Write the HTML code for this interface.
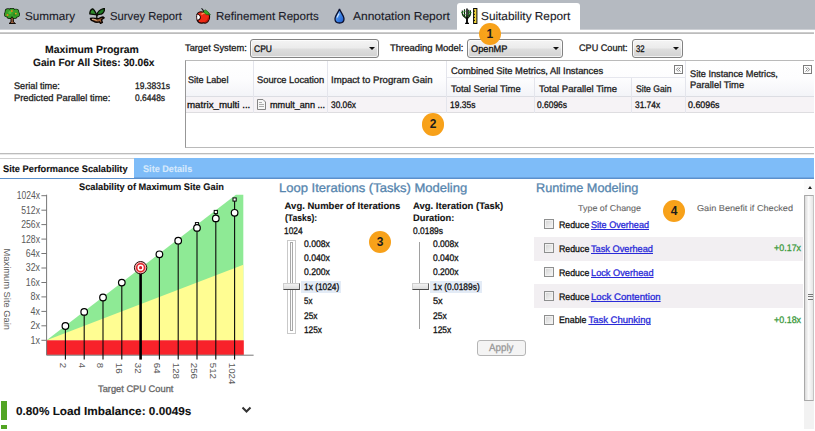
<!DOCTYPE html>
<html lang="en">
<head>
<meta charset="utf-8">
<title>Suitability Report</title>
<style>
html,body{margin:0;padding:0;}
body{width:815px;height:431px;position:relative;overflow:hidden;background:#fff;font-family:"Liberation Sans",Arial,sans-serif;}
.abs{position:absolute;}
.t{position:absolute;white-space:pre;text-rendering:geometricPrecision;transform-origin:0 50%;display:block;-webkit-text-stroke:0.3px;}
section,nav,header,div,span,svg{box-sizing:border-box;}
#tabbar{position:absolute;left:0;top:0;width:815px;height:30px;background:linear-gradient(#b5bac1 0,#b5bac1 29px,#cdd0d5 29px);}
#tabbar .active{position:absolute;left:457px;top:3px;width:123px;height:30px;background:#fff;border-radius:3px 3px 0 0;}
#hline1{position:absolute;left:0;top:32px;width:814px;height:2px;background:linear-gradient(#d4d4d4,#b4b4b4);}
.badge{position:absolute;width:22.400px;height:22.400px;border-radius:50%;background:radial-gradient(circle at 50% 45%,#f9a51c 0,#f7a019 70%,#f9b040 100%);color:#1c1c1c;font-weight:700;font-size:12px;line-height:22.400px;text-align:center;}
.combo{position:absolute;height:19px;top:39px;border:1px solid #828282;border-radius:3px;background:linear-gradient(#f4f4f4 0,#ebebeb 48%,#dedede 52%,#d2d2d2 100%);box-shadow:inset 0 0 0 1px rgba(255,255,255,.7);}
.combo i{position:absolute;right:3.5px;top:7px;width:0;height:0;border-left:3.2px solid transparent;border-right:3.2px solid transparent;border-top:3.5px solid #111;}
#grid{position:absolute;left:185px;top:60px;width:629px;height:88px;border:1px solid #bababa;border-left-color:#979797;border-right:0;background:#fff;}
#grid .hdr{position:absolute;left:0;top:0;width:628px;height:36px;background:linear-gradient(#ffffff 0,#fdfdfe 50%,#f3f4f8 100%);border-bottom:1px solid #dcdde3;}
#grid .row{position:absolute;left:0;top:36px;width:628px;height:16px;background:#f6f3f6;border-bottom:1px solid #dedde0;}
#grid .vs{position:absolute;top:0;width:1px;height:52px;background:#e4e5ec;}
#grid .hs{position:absolute;left:261px;top:16px;width:238px;height:1px;background:#e6e7ee;}
.exp{position:absolute;top:64.600px;width:9px;height:9px;border:1px solid #7c7c7c;background:#fdfdfd;}
#hline2{position:absolute;left:0;top:153px;width:814px;height:2px;background:linear-gradient(#bcbcbc 0,#bcbcbc 1px,#e9e9e9 1px,#e9e9e9 2px);}
#ltabs{position:absolute;left:0;top:158px;width:814px;height:21px;background:linear-gradient(#7ebcf8 0,#7ebcf8 18.5px,#6ea6e2 19.5px,#5d93cf 20px);border-bottom:1px solid #5b90cc;}
#ltabs .active{position:absolute;left:0;top:0;width:134.3px;height:19.6px;background:#fff;border-top:1px solid #d0d0d0;}
.rowbg{position:absolute;left:534px;width:269px;height:23px;background:#f2eff2;}
.cb{position:absolute;left:544px;width:10px;height:10px;border:1px solid #8e8f8f;background:linear-gradient(135deg,#d2d2d2,#f8f8f8);box-shadow:inset 0 0 0 1px #f1f1f1;}
.hl{position:absolute;height:11.5px;background:#e3ebf6;}
.thumb{position:absolute;width:17px;height:7.6px;background:linear-gradient(#f3f3f3,#dcdcdc);border-top:1px solid #cfcfcf;border-left:1px solid #cfcfcf;border-right:1px solid #5e5e5e;border-bottom:1.5px solid #4a4a4a;}
#apply{position:absolute;left:476.5px;top:340px;width:49.5px;height:15.5px;border:1px solid #b5b5b5;border-radius:3px;background:#f4f4f4;}
#vscroll{position:absolute;left:803.700px;top:179.500px;width:10.300px;height:249px;background:#f2f2f2;}
#vscroll .th{position:absolute;left:0;top:15.5px;width:10.300px;height:205.5px;border:1px solid #a9a9a9;border-right-color:#c4c4c4;border-radius:1px;background:linear-gradient(90deg,#dadada 0,#fbfbfb 45%,#e6e6e6 100%);}
#vscroll .up{position:absolute;left:0;top:0;width:11px;height:16px;background:#fbfbfb;}
#vscroll .up i{position:absolute;left:4.2px;top:6.8px;width:0;height:0;border-left:2.6px solid transparent;border-right:2.6px solid transparent;border-bottom:3.3px solid #222;}
#vscroll .grip{position:absolute;left:3.5px;top:98px;width:5px;height:6px;background:repeating-linear-gradient(#777 0,#777 1px,transparent 1px,transparent 2.4px);}
</style>
</head>
<body>

<nav id="tabbar">
  <div class="active"></div>
  <svg class="abs" style="left:4px;top:8px" width="16" height="16" viewBox="0 0 16 16"><path d="M5.800 9.200L7 11.200V14L5 15.500H11.500L9.400 14V11.200L10.600 9.200z" fill="#9a5f3c" stroke="#140a05" stroke-width="1"/><circle cx="4" cy="3.6" r="3.25" fill="#0b1407"/><circle cx="8" cy="2.9" r="3.15" fill="#0b1407"/><circle cx="12" cy="3.8" r="3.15" fill="#0b1407"/><circle cx="2.9" cy="6.4" r="2.95" fill="#0b1407"/><circle cx="13.1" cy="6.4" r="2.95" fill="#0b1407"/><circle cx="5.4" cy="8" r="2.95" fill="#0b1407"/><circle cx="10.6" cy="7.9" r="2.95" fill="#0b1407"/><circle cx="8" cy="5.5" r="3.55" fill="#0b1407"/><circle cx="4" cy="3.6" r="2.60" fill="#3a9f28"/><circle cx="8" cy="2.9" r="2.50" fill="#3a9f28"/><circle cx="12" cy="3.8" r="2.50" fill="#3a9f28"/><circle cx="2.9" cy="6.4" r="2.30" fill="#3a9f28"/><circle cx="13.1" cy="6.4" r="2.30" fill="#3a9f28"/><circle cx="5.4" cy="8" r="2.30" fill="#3a9f28"/><circle cx="10.6" cy="7.9" r="2.30" fill="#3a9f28"/><circle cx="8" cy="5.5" r="2.90" fill="#3a9f28"/><circle cx="6" cy="4.500" r="1.600" fill="#4fc436"/><circle cx="10.500" cy="6.500" r="1.500" fill="#2c8a20"/><circle cx="7.800" cy="3" r="1" fill="#e88a1c"/><circle cx="3.500" cy="7" r="1" fill="#e8821c"/><circle cx="11.800" cy="5.600" r=".9" fill="#e8a01c"/></svg>
<svg class="abs" style="left:89px;top:8px" width="16" height="16" viewBox="0 0 16 16">
<path d="M1.500 10.500c2-.8 4.500 0 6.500.3 2 .2 4-1.800 6-1.800l1 .800-2.500 2 .800 2.700-1.800.900-1-1.500c-2 .600-4.500.300-6-.700-1.500-.500-3-1.200-3-2.700z" fill="#9a5c34" stroke="#0c0603" stroke-width="1.400"/>
<path d="M3 11.300c1.500-.3 3 .2 4.500 1" stroke="#e8c6a0" stroke-width="1" fill="none"/>
<path d="M7.800 10.500V6.500" stroke="#0d1208" stroke-width="1.400"/>
<path d="M7.800 7C6.500 5 5.500 1 3.500.800 1.800 1.500.800 4 .800 5.800c2 .700 5 .500 7 1.200z" fill="#2f8a2a" stroke="#0a0f06" stroke-width="1.300"/>
<path d="M7.800 7c.500-2.500 3-6 7.700-6.500.200 2-1 5-3 5.500-1.500.500-3.200.300-4.700 1z" fill="#1f7a22" stroke="#0a0f06" stroke-width="1.300"/>
</svg>
<svg class="abs" style="left:195.500px;top:7.500px" width="15" height="16" viewBox="0 0 15 16">
<path d="M7 4.200C5 3.200 2 3.800 1 6.400C3 6.600 4.500 8 4.300 9.600C4.100 11.200 2.500 12 1.200 12.200C2 14 4 15.400 6 15.100C7 14.800 8 14.800 9 15.100C11.500 15.400 13.600 12 13.600 9C13.600 6 11.500 3.600 9.500 3.900C8.500 4.100 8 4.500 7 4.200z" fill="#ee2a14" stroke="#1a0505" stroke-width="1.100"/>
<path d="M1 6.600C2.800 6.900 4 8.200 3.800 9.500C3.600 10.800 2.400 11.600 1.100 11.900C.600 10.500.500 8.200 1 6.600z" fill="#fff"/>
<path d="M1 6.400C.400 8 .500 10.500 1.200 12.200" fill="none" stroke="#2a0a0a" stroke-width="1"/>
<path d="M5.500 6.500c1-1.300 2.800-1.800 4.200-1.200" stroke="#ff9a5a" stroke-width="1.300" fill="none"/>
<path d="M9.500 13.800c1.800-.600 3-2.300 3.200-4.300" stroke="#b81408" stroke-width="1.200" fill="none"/>
<path d="M7 3.200L9.400 1.900L11.500 3.400L14.400 6.800L10.500 6.600L8.500 5z" fill="#35a526" stroke="#165c10" stroke-width=".7"/>
<path d="M7.600 3.800C7.300 2.300 6.600 1.200 5.500.400" stroke="#111" stroke-width="1.100" fill="none"/>
</svg>
<svg class="abs" style="left:334.200px;top:7.900px" width="11" height="16" viewBox="0 0 11 16">
<defs><linearGradient id="dg" x1="0" y1="0" x2="1" y2="1"><stop offset="0" stop-color="#9fd0ff"/><stop offset=".5" stop-color="#3f86e8"/><stop offset="1" stop-color="#1d55c4"/></linearGradient></defs>
<path d="M5.500 1C5 3.500 1 7.500 1 11c0 2.500 2 4 4.500 4S10 13.500 10 11c0-3.500-4-7.500-4.500-10z" fill="url(#dg)" stroke="#0a1030" stroke-width="1.300"/>
<path d="M3.300 9.500c.300-1.500 1-2.800 1.800-3.800" stroke="#d8ecff" stroke-width="1.100" fill="none"/>
</svg>
<svg class="abs" style="left:461px;top:8px" width="17" height="16" viewBox="0 0 17 16">
<path d="M1 6L2.500 8.500L5 10L6 10.800L7 10L9 8.500L10.300 6L9 6.500L7.500 8L6 7L4.500 8L2.500 6.500z" fill="#3a8f2e" opacity=".7"/>
<path d="M1.300 2.600V6C1.300 8 3.500 9 5.600 10.500M3.500 1.300V8.300M7.700 1.800V8.300M9.400 2.200V6C9.400 8 8 9 6.400 10.500" stroke="#0e240c" stroke-width="1.150" fill="none"/>
<path d="M.300 4.500h2M2.600 3.300h1.800M6.800 3.800h1.800M8.500 4.600h2M2.500 6.500h2M7 6.500h2" stroke="#1f7a1f" stroke-width="1.200" fill="none"/>
<path d="M6 .400V10" stroke="#000" stroke-width="1.500" fill="none"/><path d="M6 9.500V15.300" stroke="#050505" stroke-width="1.900" fill="none"/>
<path d="M4.100 15.400h3.900" stroke="#050505" stroke-width="1.300" fill="none"/>
<rect x="12.600" y=".500" width="3.300" height="15" fill="#f5d83a" stroke="#0a0a0a" stroke-width="1"/>
<path d="M12.600 3.200h1.400M12.600 6.300h1.400M12.600 9.400h1.400M12.600 12.400h1.400" stroke="#0a0a0a" stroke-width="1"/>
</svg>
  <span class="t" style="left:24.5px;top:10px;font-size:11.5px;line-height:14px;color:#1b1b28;transform:scaleX(1.018);-webkit-text-stroke:0.12px;">Summary</span>
<span class="t" style="left:109.5px;top:10px;font-size:11.5px;line-height:14px;color:#1b1b28;transform:scaleX(0.979);-webkit-text-stroke:0.12px;">Survey Report</span>
<span class="t" style="left:215.6px;top:10px;font-size:11.5px;line-height:14px;color:#1b1b28;transform:scaleX(1.005);-webkit-text-stroke:0.12px;">Refinement Reports</span>
<span class="t" style="left:352.5px;top:10px;font-size:11.5px;line-height:14px;color:#1b1b28;transform:scaleX(1.044);-webkit-text-stroke:0.12px;">Annotation Report</span>
<span class="t" style="left:481.4px;top:10px;font-size:11.5px;line-height:14px;color:#1b1b28;transform:scaleX(1.027);-webkit-text-stroke:0.12px;">Suitability Report</span>
</nav>
<div id="hline1"></div>

<section id="summary">
<span class="t" style="left:44.8px;top:44px;font-size:10.5px;line-height:13px;color:#111;font-weight:700;transform:scaleX(0.993);-webkit-text-stroke:0.1px;">Maximum Program</span>
<span class="t" style="left:33.1px;top:57px;font-size:10.5px;line-height:13px;color:#111;font-weight:700;transform:scaleX(0.967);-webkit-text-stroke:0.1px;">Gain For All Sites: 30.06x</span>
<span class="t" style="left:13.7px;top:81px;font-size:9.5px;line-height:11px;color:#222;transform:scaleX(0.966);">Serial time:</span>
<span class="t" style="left:13.7px;top:93px;font-size:9.5px;line-height:11px;color:#222;transform:scaleX(0.986);">Predicted Parallel time:</span>
<span class="t" style="left:135.2px;top:81px;font-size:9.5px;line-height:11px;color:#222;transform:scaleX(0.893);">19.3831s</span>
<span class="t" style="left:135.2px;top:93px;font-size:9.5px;line-height:11px;color:#222;transform:scaleX(0.890);">0.6448s</span>
</section>

<section id="toolbar">
  <div class="combo" style="left:250px;width:129px;"><i></i></div>
  <div class="combo" style="left:467px;width:96px;"><i></i></div>
  <div class="combo" style="left:632px;width:51px;"><i></i></div>
<span class="t" style="left:185.3px;top:43px;font-size:9.5px;line-height:11px;color:#222;transform:scaleX(0.974);">Target System:</span>
<span class="t" style="left:254.0px;top:44px;font-size:9.5px;line-height:11px;color:#111;transform:scaleX(0.897);">CPU</span>
<span class="t" style="left:389.5px;top:43px;font-size:9.5px;line-height:11px;color:#222;transform:scaleX(0.994);">Threading Model:</span>
<span class="t" style="left:470.6px;top:44px;font-size:9.5px;line-height:11px;color:#111;transform:scaleX(0.971);">OpenMP</span>
<span class="t" style="left:579.0px;top:43px;font-size:9.5px;line-height:11px;color:#222;transform:scaleX(0.959);">CPU Count:</span>
<span class="t" style="left:635.9px;top:44px;font-size:9.5px;line-height:11px;color:#111;transform:scaleX(0.813);">32</span>
</section>

<section id="grid">
  <div class="hdr"></div>
  <div class="row"></div>
  <div class="vs" style="left:67px"></div>
  <div class="vs" style="left:141px"></div>
  <div class="vs" style="left:260px"></div>
  <div class="vs" style="left:348px;top:17px;height:35px"></div>
  <div class="vs" style="left:445px;top:17px;height:35px"></div>
  <div class="vs" style="left:499px"></div>
  <div class="hs"></div>
</section>
<svg class="exp" style="left:674px" viewBox="0 0 9 9"><path d="M4.200 1.800L1.800 4.500L4.200 7.200M7 1.800L4.600 4.500L7 7.200" fill="none" stroke="#666" stroke-width="1"/></svg>
<svg class="exp" style="left:803.300px" viewBox="0 0 9 9"><path d="M2 1.800L4.400 4.500L2 7.200M4.800 1.800L7.200 4.500L4.800 7.200" fill="none" stroke="#666" stroke-width="1"/></svg>
<svg class="abs" style="left:257px;top:99px" width="9" height="11" viewBox="0 0 9 11"><path d="M0.5 0.5h5.5l2.5 2.5v7.5h-8z" fill="#f7f7f7" stroke="#858585"/><path d="M2 3.5h3M2 5.5h5M2 7.5h5" stroke="#9a9a9a" stroke-width="0.8"/></svg>
<section id="gridtext">
<span class="t" style="left:188.2px;top:75px;font-size:9.5px;line-height:11px;color:#222;transform:scaleX(0.956);">Site Label</span>
<span class="t" style="left:257.1px;top:75px;font-size:9.5px;line-height:11px;color:#222;transform:scaleX(0.979);">Source Location</span>
<span class="t" style="left:330.8px;top:75px;font-size:9.5px;line-height:11px;color:#222;transform:scaleX(1.007);">Impact to Program Gain</span>
<span class="t" style="left:451.0px;top:66px;font-size:9.5px;line-height:11px;color:#222;transform:scaleX(0.987);">Combined Site Metrics, All Instances</span>
<span class="t" style="left:451.0px;top:84px;font-size:9.5px;line-height:11px;color:#222;transform:scaleX(0.992);">Total Serial Time</span>
<span class="t" style="left:538.7px;top:84px;font-size:9.5px;line-height:11px;color:#222;transform:scaleX(1.005);">Total Parallel Time</span>
<span class="t" style="left:636.0px;top:84px;font-size:9.5px;line-height:11px;color:#222;transform:scaleX(0.908);">Site Gain</span>
<span class="t" style="left:689.6px;top:69px;font-size:9.5px;line-height:11px;color:#222;transform:scaleX(0.968);">Site Instance Metrics,</span>
<span class="t" style="left:689.6px;top:80px;font-size:9.5px;line-height:11px;color:#222;transform:scaleX(0.985);">Parallel Time</span>
<span class="t" style="left:187.4px;top:100px;font-size:9.5px;line-height:11px;color:#111;transform:scaleX(1.025);">matrix_multi ...</span>
<span class="t" style="left:269.8px;top:100px;font-size:9.5px;line-height:11px;color:#111;transform:scaleX(0.957);">mmult_ann ...</span>
<span class="t" style="left:330.8px;top:100px;font-size:9.5px;line-height:11px;color:#111;transform:scaleX(0.876);">30.06x</span>
<span class="t" style="left:449.6px;top:100px;font-size:9.5px;line-height:11px;color:#111;transform:scaleX(0.890);">19.35s</span>
<span class="t" style="left:537.2px;top:100px;font-size:9.5px;line-height:11px;color:#111;transform:scaleX(0.887);">0.6096s</span>
<span class="t" style="left:635.0px;top:100px;font-size:9.5px;line-height:11px;color:#111;transform:scaleX(0.880);">31.74x</span>
<span class="t" style="left:688.0px;top:100px;font-size:9.5px;line-height:11px;color:#111;transform:scaleX(0.932);">0.6096s</span>
</section>

<div class="badge" style="left:478.600px;top:22.900px;">1</div>
<div class="badge" style="left:421.800px;top:113.400px;">2</div>

<div id="hline2"></div>
<nav id="ltabs"><div class="active"></div></nav>
<section id="ltabstext">
<span class="t" style="left:3.0px;top:164px;font-size:9.5px;line-height:11px;color:#111;font-weight:700;transform:scaleX(0.975);-webkit-text-stroke:0.1px;">Site Performance Scalability</span>
<span class="t" style="left:143.0px;top:164px;font-size:9.5px;line-height:11px;color:#d6e9fc;font-weight:700;transform:scaleX(0.961);-webkit-text-stroke:0.1px;">Site Details</span>
</section>

<section id="chart">
<svg class="abs" style="left:0;top:178px" width="272" height="253" viewBox="0 178 272 253" font-family="'Liberation Sans',Arial,sans-serif">
<polygon points="46.6,340.3 235.9,194.7 243.3,194.7 243.3,340.3" fill="#8eea95"/>
<polygon points="46.6,340.3 243.3,264.7 243.3,340.3" fill="#fffd92"/>
<rect x="46.6" y="340.3" width="197.2" height="14.6" fill="#f8222a"/>
<path d="M46.6 194.7V355.2H253.6" fill="none" stroke="#777" stroke-width="1"/>
<path d="M41.4 340.3H46.6" stroke="#777" stroke-width="1"/>
<text x="40" y="343.7" text-anchor="end" font-size="10" fill="#5a5a5a" textLength="9.5" lengthAdjust="spacingAndGlyphs">1x</text>
<path d="M41.4 325.8H46.6" stroke="#777" stroke-width="1"/>
<text x="40" y="329.2" text-anchor="end" font-size="10" fill="#5a5a5a" textLength="9.5" lengthAdjust="spacingAndGlyphs">2x</text>
<path d="M41.4 311.4H46.6" stroke="#777" stroke-width="1"/>
<text x="40" y="314.8" text-anchor="end" font-size="10" fill="#5a5a5a" textLength="9.5" lengthAdjust="spacingAndGlyphs">4x</text>
<path d="M41.4 296.9H46.6" stroke="#777" stroke-width="1"/>
<text x="40" y="300.3" text-anchor="end" font-size="10" fill="#5a5a5a" textLength="9.5" lengthAdjust="spacingAndGlyphs">8x</text>
<path d="M41.4 282.5H46.6" stroke="#777" stroke-width="1"/>
<text x="40" y="285.9" text-anchor="end" font-size="10" fill="#5a5a5a" textLength="14.2" lengthAdjust="spacingAndGlyphs">16x</text>
<path d="M41.4 268.0H46.6" stroke="#777" stroke-width="1"/>
<text x="40" y="271.4" text-anchor="end" font-size="10" fill="#5a5a5a" textLength="14.2" lengthAdjust="spacingAndGlyphs">32x</text>
<path d="M41.4 253.5H46.6" stroke="#777" stroke-width="1"/>
<text x="40" y="256.9" text-anchor="end" font-size="10" fill="#5a5a5a" textLength="14.2" lengthAdjust="spacingAndGlyphs">64x</text>
<path d="M41.4 239.1H46.6" stroke="#777" stroke-width="1"/>
<text x="40" y="242.5" text-anchor="end" font-size="10" fill="#5a5a5a" textLength="18.8" lengthAdjust="spacingAndGlyphs">128x</text>
<path d="M41.4 224.6H46.6" stroke="#777" stroke-width="1"/>
<text x="40" y="228.0" text-anchor="end" font-size="10" fill="#5a5a5a" textLength="18.8" lengthAdjust="spacingAndGlyphs">256x</text>
<path d="M41.4 210.2H46.6" stroke="#777" stroke-width="1"/>
<text x="40" y="213.6" text-anchor="end" font-size="10" fill="#5a5a5a" textLength="18.8" lengthAdjust="spacingAndGlyphs">512x</text>
<path d="M41.4 195.7H46.6" stroke="#777" stroke-width="1"/>
<text x="40" y="199.1" text-anchor="end" font-size="10" fill="#5a5a5a" textLength="23.3" lengthAdjust="spacingAndGlyphs">1024x</text>
<path d="M65.4 326V359.6" stroke="#0a0a0a" stroke-width="1.1"/>
<circle cx="65.4" cy="326" r="3.3" fill="#fff" stroke="#000" stroke-width="1.2"/>
<text transform="translate(59.8 362.8) rotate(90)" font-size="9.5" fill="#5a5a5a" textLength="5.3" lengthAdjust="spacingAndGlyphs">2</text>
<path d="M84.2 311.9V359.6" stroke="#0a0a0a" stroke-width="1.1"/>
<circle cx="84.2" cy="311.9" r="3.3" fill="#fff" stroke="#000" stroke-width="1.2"/>
<text transform="translate(78.6 362.8) rotate(90)" font-size="9.5" fill="#5a5a5a" textLength="5.3" lengthAdjust="spacingAndGlyphs">4</text>
<path d="M103.0 297.5V359.6" stroke="#0a0a0a" stroke-width="1.1"/>
<circle cx="103.0" cy="297.5" r="3.3" fill="#fff" stroke="#000" stroke-width="1.2"/>
<text transform="translate(97.4 362.8) rotate(90)" font-size="9.5" fill="#5a5a5a" textLength="5.3" lengthAdjust="spacingAndGlyphs">8</text>
<path d="M121.8 282.6V359.6" stroke="#0a0a0a" stroke-width="1.1"/>
<circle cx="121.8" cy="282.6" r="3.3" fill="#fff" stroke="#000" stroke-width="1.2"/>
<text transform="translate(116.2 362.8) rotate(90)" font-size="9.5" fill="#5a5a5a" textLength="10.8" lengthAdjust="spacingAndGlyphs">16</text>
<path d="M140.6 267.7V359.6" stroke="#000" stroke-width="2.6"/>
<circle cx="140.6" cy="267.7" r="6.2" fill="#f3b4b4" stroke="#2a0c0c" stroke-width="1"/>
<circle cx="140.6" cy="267.7" r="4.7" fill="#e1262c"/>
<circle cx="140.6" cy="267.7" r="3.1" fill="#fff"/>
<circle cx="140.6" cy="267.7" r="1.6" fill="#d81f28"/>
<text transform="translate(135.0 362.8) rotate(90)" font-size="9.5" fill="#5a5a5a" textLength="10.8" lengthAdjust="spacingAndGlyphs">32</text>
<path d="M159.4 254.3V359.6" stroke="#0a0a0a" stroke-width="1.1"/>
<circle cx="159.4" cy="254.3" r="3.3" fill="#fff" stroke="#000" stroke-width="1.2"/>
<text transform="translate(153.8 362.8) rotate(90)" font-size="9.5" fill="#5a5a5a" textLength="10.8" lengthAdjust="spacingAndGlyphs">64</text>
<path d="M178.2 240.7V359.6" stroke="#0a0a0a" stroke-width="1.1"/>
<circle cx="178.2" cy="240.7" r="3.3" fill="#fff" stroke="#000" stroke-width="1.2"/>
<text transform="translate(172.6 362.8) rotate(90)" font-size="9.5" fill="#5a5a5a" textLength="16.2" lengthAdjust="spacingAndGlyphs">128</text>
<path d="M197.0 224.2V359.6" stroke="#0a0a0a" stroke-width="1.1"/>
<rect x="195.4" y="222.6" width="3.2" height="3.2" fill="#fff" stroke="#000" stroke-width="1"/>
<circle cx="197.0" cy="227.9" r="3.3" fill="#fff" stroke="#000" stroke-width="1.2"/>
<text transform="translate(191.4 362.8) rotate(90)" font-size="9.5" fill="#5a5a5a" textLength="16.2" lengthAdjust="spacingAndGlyphs">256</text>
<path d="M215.8 212V359.6" stroke="#0a0a0a" stroke-width="1.1"/>
<rect x="214.2" y="210.4" width="3.2" height="3.2" fill="#fff" stroke="#000" stroke-width="1"/>
<circle cx="215.8" cy="218.4" r="3.3" fill="#fff" stroke="#000" stroke-width="1.2"/>
<text transform="translate(210.2 362.8) rotate(90)" font-size="9.5" fill="#5a5a5a" textLength="16.2" lengthAdjust="spacingAndGlyphs">512</text>
<path d="M234.6 199.5V359.6" stroke="#0a0a0a" stroke-width="1.1"/>
<rect x="233.0" y="197.9" width="3.2" height="3.2" fill="#fff" stroke="#000" stroke-width="1"/>
<circle cx="234.6" cy="212.8" r="3.3" fill="#fff" stroke="#000" stroke-width="1.2"/>
<text transform="translate(229.0 362.8) rotate(90)" font-size="9.5" fill="#5a5a5a" textLength="21.5" lengthAdjust="spacingAndGlyphs">1024</text>
<text transform="translate(3.6 248.5) rotate(90)" font-size="9.8" fill="#5a5a5a" textLength="81.5" lengthAdjust="spacingAndGlyphs">Maximum Site Gain</text>
</svg>
<span class="t" style="left:78.6px;top:182px;font-size:9.5px;line-height:11px;color:#111;font-weight:700;transform:scaleX(0.973);-webkit-text-stroke:0.1px;">Scalability of Maximum Site Gain</span>
<span class="t" style="left:97.6px;top:384px;font-size:9.5px;line-height:11px;color:#666;transform:scaleX(0.978);">Target CPU Count</span>
<span class="t" style="left:16.0px;top:405px;font-size:11.5px;line-height:14px;color:#111;font-weight:700;transform:scaleX(1.024);-webkit-text-stroke:0.1px;">0.80% Load Imbalance: 0.0049s</span>
<div class="abs" style="left:1px;top:401.300px;width:6.200px;height:18.700px;background:#52a524"></div>
<div class="abs" style="left:1px;top:424.500px;width:6.200px;height:4.400px;background:#52a524"></div>
<svg class="abs" style="left:240.5px;top:406px" width="11" height="8" viewBox="0 0 11 8"><path d="M1.5 1.5L5.5 5.5L9.5 1.5" fill="none" stroke="#333" stroke-width="2"/></svg>
</section>

<section id="loop">
  <div class="abs" style="left:287.4px;top:239.800px;width:8.600px;height:93.800px;border:1px solid #c9c9c9;"></div>
  <div class="abs" style="left:290.100px;top:242.300px;width:3.200px;height:89.200px;border:1px solid #a9a9a9;background:#fdfdfd"></div>
  <div class="abs" style="left:418.5px;top:242px;width:1px;height:87px;background:#a0a0a0;"></div>
  <div class="hl" style="left:300.5px;top:281px;width:40.5px;"></div>
  <div class="hl" style="left:430px;top:281px;width:52px;"></div>
  <div class="thumb" style="left:282.600px;top:282.700px;"></div>
  <div class="thumb" style="left:411.600px;top:282.700px;"></div>
  <div id="apply"></div>
<span class="t" style="left:278.6px;top:181px;font-size:12.5px;line-height:15px;color:#5685ae;transform:scaleX(1.042);-webkit-text-stroke:0.3px;">Loop Iterations (Tasks) Modeling</span>
<span class="t" style="left:284.6px;top:201px;font-size:9.5px;line-height:11px;color:#111;font-weight:700;-webkit-text-stroke:0.1px;">Avg. Number of Iterations</span>
<span class="t" style="left:284.6px;top:213px;font-size:9.5px;line-height:11px;color:#111;font-weight:700;transform:scaleX(0.901);-webkit-text-stroke:0.1px;">(Tasks):</span>
<span class="t" style="left:284.0px;top:226px;font-size:9.5px;line-height:11px;color:#111;transform:scaleX(0.880);">1024</span>
<span class="t" style="left:304.0px;top:239px;font-size:9.5px;line-height:11px;color:#111;transform:scaleX(0.908);">0.008x</span>
<span class="t" style="left:432.8px;top:239px;font-size:9.5px;line-height:11px;color:#111;transform:scaleX(0.897);">0.008x</span>
<span class="t" style="left:304.0px;top:253px;font-size:9.5px;line-height:11px;color:#111;transform:scaleX(0.908);">0.040x</span>
<span class="t" style="left:432.8px;top:253px;font-size:9.5px;line-height:11px;color:#111;transform:scaleX(0.897);">0.040x</span>
<span class="t" style="left:304.0px;top:267px;font-size:9.5px;line-height:11px;color:#111;transform:scaleX(0.908);">0.200x</span>
<span class="t" style="left:432.8px;top:267px;font-size:9.5px;line-height:11px;color:#111;transform:scaleX(0.897);">0.200x</span>
<span class="t" style="left:304.0px;top:282px;font-size:9.5px;line-height:11px;color:#111;transform:scaleX(0.879);">1x (1024)</span>
<span class="t" style="left:432.8px;top:282px;font-size:9.5px;line-height:11px;color:#111;transform:scaleX(0.884);">1x (0.0189s)</span>
<span class="t" style="left:304.0px;top:296px;font-size:9.5px;line-height:11px;color:#111;transform:scaleX(0.836);">5x</span>
<span class="t" style="left:432.8px;top:296px;font-size:9.5px;line-height:11px;color:#111;transform:scaleX(0.965);">5x</span>
<span class="t" style="left:304.0px;top:311px;font-size:9.5px;line-height:11px;color:#111;transform:scaleX(0.881);">25x</span>
<span class="t" style="left:432.8px;top:311px;font-size:9.5px;line-height:11px;color:#111;transform:scaleX(0.894);">25x</span>
<span class="t" style="left:304.0px;top:325px;font-size:9.5px;line-height:11px;color:#111;transform:scaleX(0.873);">125x</span>
<span class="t" style="left:432.8px;top:325px;font-size:9.5px;line-height:11px;color:#111;transform:scaleX(0.883);">125x</span>
<span class="t" style="left:413.0px;top:201px;font-size:9.5px;line-height:11px;color:#111;font-weight:700;-webkit-text-stroke:0.1px;">Avg. Iteration (Task)</span>
<span class="t" style="left:413.0px;top:213px;font-size:9.5px;line-height:11px;color:#111;font-weight:700;transform:scaleX(0.978);-webkit-text-stroke:0.1px;">Duration:</span>
<span class="t" style="left:413.0px;top:226px;font-size:9.5px;line-height:11px;color:#111;transform:scaleX(0.887);">0.0189s</span>
<span class="t" style="left:489.0px;top:342px;font-size:10.5px;line-height:13px;color:#989898;transform:scaleX(0.933);">Apply</span>
</section>
<div class="badge" style="left:368.800px;top:230.600px;">3</div>

<section id="runtime">
  <div class="rowbg" style="top:236.5px;height:24px"></div>
  <div class="rowbg" style="top:284.3px;height:23.6px"></div>
  <div class="cb" style="top:218.8px"></div>
  <div class="cb" style="top:243px"></div>
  <div class="cb" style="top:267px"></div>
  <div class="cb" style="top:291px"></div>
  <div class="cb" style="top:315.2px"></div>
<span class="t" style="left:535.6px;top:181px;font-size:12.5px;line-height:15px;color:#5685ae;transform:scaleX(1.016);-webkit-text-stroke:0.3px;">Runtime Modeling</span>
<span class="t" style="left:577.5px;top:203px;font-size:8.5px;line-height:10px;color:#666;transform:scaleX(1.050);-webkit-text-stroke:0.1px;">Type of Change</span>
<span class="t" style="left:697.0px;top:203px;font-size:8.5px;line-height:10px;color:#666;transform:scaleX(1.075);-webkit-text-stroke:0.1px;">Gain Benefit if Checked</span>
<span class="t" style="left:558.7px;top:220px;font-size:9.5px;line-height:11px;color:#111;transform:scaleX(0.925);">Reduce</span>
<a class="t" style="left:591.2px;top:220px;font-size:9.5px;line-height:11px;color:#2a2ad8;transform:scaleX(0.955);text-decoration:underline;">Site Overhead</a>
<span class="t" style="left:558.7px;top:244px;font-size:9.5px;line-height:11px;color:#111;transform:scaleX(0.925);">Reduce</span>
<a class="t" style="left:591.2px;top:244px;font-size:9.5px;line-height:11px;color:#2a2ad8;transform:scaleX(0.970);text-decoration:underline;">Task Overhead</a>
<span class="t" style="left:773.9px;top:243px;font-size:9.5px;line-height:11px;color:#3d9a3d;transform:scaleX(0.941);">+0.17x</span>
<span class="t" style="left:558.7px;top:268px;font-size:9.5px;line-height:11px;color:#111;transform:scaleX(0.925);">Reduce</span>
<a class="t" style="left:591.3px;top:268px;font-size:9.5px;line-height:11px;color:#2a2ad8;transform:scaleX(0.971);text-decoration:underline;">Lock Overhead</a>
<span class="t" style="left:558.7px;top:292px;font-size:9.5px;line-height:11px;color:#111;transform:scaleX(0.925);">Reduce</span>
<a class="t" style="left:591.2px;top:292px;font-size:9.5px;line-height:11px;color:#2a2ad8;transform:scaleX(1.014);text-decoration:underline;">Lock Contention</a>
<span class="t" style="left:558.7px;top:315px;font-size:9.5px;line-height:11px;color:#111;transform:scaleX(0.926);">Enable</span>
<a class="t" style="left:588.4px;top:315px;font-size:9.5px;line-height:11px;color:#2a2ad8;text-decoration:underline;">Task Chunking</a>
<span class="t" style="left:773.9px;top:315px;font-size:9.5px;line-height:11px;color:#3d9a3d;transform:scaleX(0.941);">+0.18x</span>
</section>
<div class="badge" style="left:662.900px;top:199.700px;">4</div>

<div id="vscroll"><div class="up"><i></i></div><div class="th"><div class="grip"></div></div></div>

</body>
</html>
